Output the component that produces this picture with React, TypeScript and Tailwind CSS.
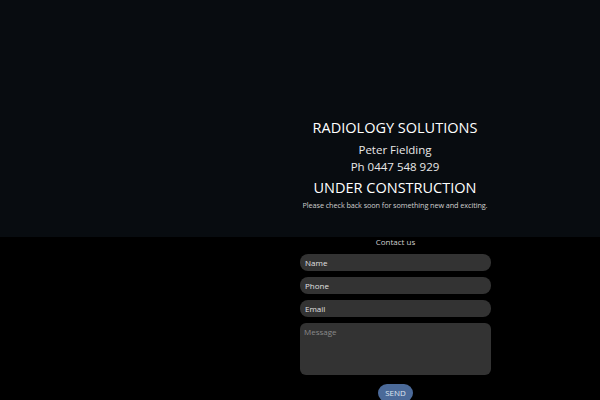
export default function App() {
  const font = { fontFamily: '"Open Sans", "Liberation Sans", sans-serif' };
  return (
    <div className="w-[600px] h-[400px] overflow-hidden bg-black" style={font}>
      {/* Header band */}
      <div className="h-[237px] bg-[#080c10] flex">
        <div className="w-[290px]" />
        <div className="w-[210px] pt-[118px] flex flex-col items-center text-white">
          <h1 className="text-[14.5px] leading-[20px]">RADIOLOGY SOLUTIONS</h1>
          <p className="mt-[3px] text-[11.5px] leading-[17px] text-[#e8e8e8]">Peter Fielding</p>
          <p className="text-[11.5px] leading-[17px] text-[#e8e8e8]">Ph 0447 548 929</p>
          <h2 className="mt-[3px] text-[14.5px] leading-[20px]">UNDER CONSTRUCTION</h2>
          <p className="mt-[1px] text-[7.3px] leading-[12px] text-[#cfcfcf] tracking-[-0.1px]">
            Please check back soon for something new and exciting.
          </p>
        </div>
      </div>

      {/* Contact form */}
      <div className="flex">
        <div className="w-[300px]" />
        <form className="w-[191px] flex flex-col items-center" onSubmit={(e) => e.preventDefault()}>
          <p className="mt-[-1px] text-[8px] leading-[12px] text-[#cfcfcf]">Contact us</p>
          <div className="mt-[6px] w-full flex flex-col gap-[6px]">
            {['Name', 'Phone', 'Email'].map((label) => (
              <input
                key={label}
                placeholder={label}
                className="w-full h-[17px] rounded-[8px] bg-[#333333] px-[5px] text-[8px] text-white placeholder:text-[#e0e0e0] outline-none"
              />
            ))}
            <textarea
              placeholder="Message"
              className="w-full h-[52px] rounded-[6px] bg-[#333333] px-[4px] py-[3px] text-[8px] text-white placeholder:text-[#8a8a8a] outline-none resize-none"
            />
          </div>
          <button
            type="submit"
            className="mt-[9px] w-[35px] h-[18px] rounded-full bg-[#4b6a99] text-[8px] text-[#dfe6f0]"
          >
            SEND
          </button>
        </form>
      </div>
    </div>
  );
}
